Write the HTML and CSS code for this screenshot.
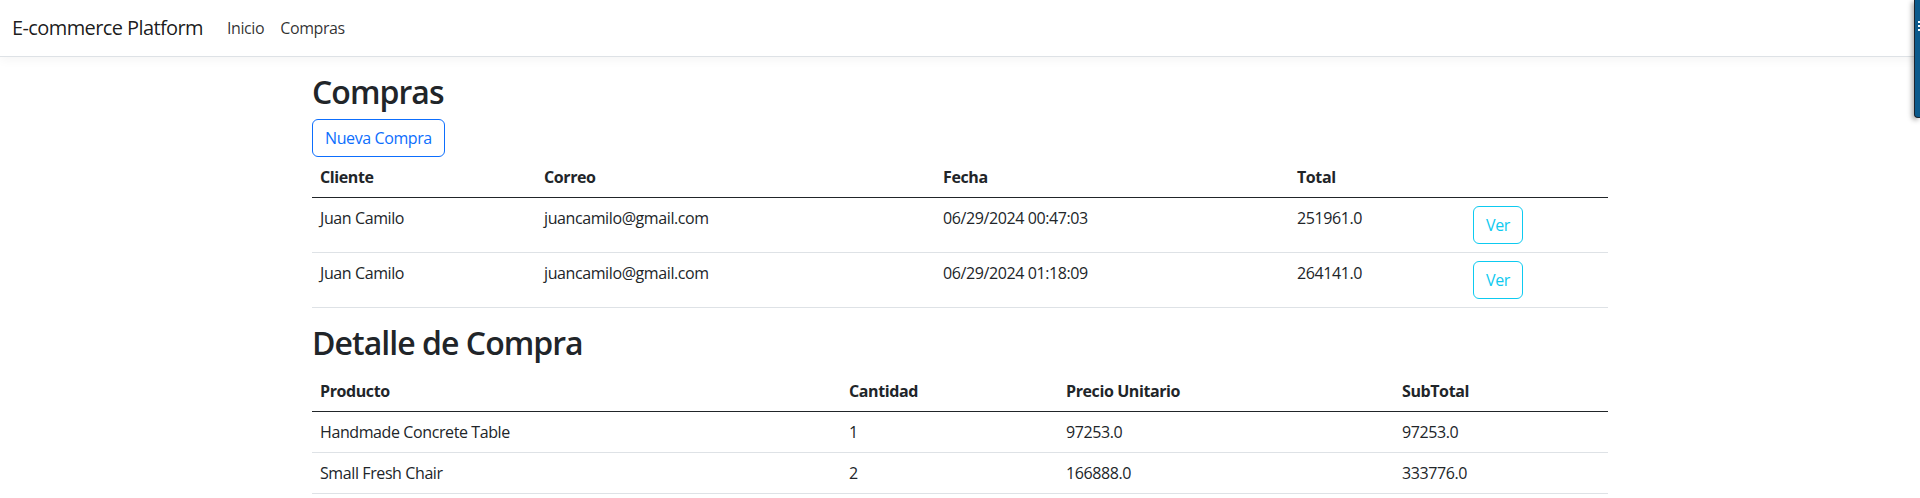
FILE: index.html
```html
<!DOCTYPE html>
<html lang="es">
<head>
<meta charset="utf-8">
<title>E-commerce Platform</title>
<link rel="stylesheet" href="styles.css">
</head>
<body>
<nav class="navbar">
  <div class="navbar-inner">
    <a class="brand" href="#">E-commerce Platform</a>
    <ul class="nav">
      <li><a class="nav-link" href="#">Inicio</a></li>
      <li><a class="nav-link" href="#">Compras</a></li>
    </ul>
  </div>
</nav>

<main class="container">
  <h2 class="title">Compras</h2>
  <button class="btn btn-primary-outline">Nueva Compra</button>
  <table class="table">
    <colgroup>
      <col class="c-cliente"><col class="c-correo"><col class="c-fecha"><col class="c-total"><col class="c-accion">
    </colgroup>
    <thead>
      <tr><th>Cliente</th><th>Correo</th><th>Fecha</th><th>Total</th><th></th></tr>
    </thead>
    <tbody>
      <tr>
        <td>Juan Camilo</td><td>juancamilo@gmail.com</td><td>06/29/2024 00:47:03</td><td>251961.0</td>
        <td><button class="btn btn-info-outline">Ver</button></td>
      </tr>
      <tr>
        <td>Juan Camilo</td><td>juancamilo@gmail.com</td><td>06/29/2024 01:18:09</td><td>264141.0</td>
        <td><button class="btn btn-info-outline">Ver</button></td>
      </tr>
    </tbody>
  </table>

  <h2 class="title">Detalle de Compra</h2>
  <table class="table">
    <colgroup>
      <col class="c-producto"><col class="c-cantidad"><col class="c-precio"><col class="c-subtotal">
    </colgroup>
    <thead>
      <tr><th>Producto</th><th>Cantidad</th><th>Precio Unitario</th><th>SubTotal</th></tr>
    </thead>
    <tbody>
      <tr><td>Handmade Concrete Table</td><td>1</td><td>97253.0</td><td>97253.0</td></tr>
      <tr><td>Small Fresh Chair</td><td>2</td><td>166888.0</td><td>333776.0</td></tr>
    </tbody>
  </table>
</main>

<div class="side-widget"><span></span><span></span><span></span></div>
</body>
</html>
```

FILE: styles.css
```css
* { box-sizing: border-box; }

html, body { height: 100%; }

body {
  margin: 0;
  font-family: "Segoe UI", "Open Sans", "Noto Sans", sans-serif;
  font-size: 16px;
  line-height: 1.5;
  letter-spacing: -0.025em;
  color: #212529;
  background: #fff;
  overflow: hidden;
}

.navbar {
  position: relative;
  background: #fff;
  padding: 8px 0;
  border-bottom: 1px solid #dee2e6;
  box-shadow: 0 3px 10px rgba(0, 0, 0, 0.045);
  z-index: 2;
}

.navbar-inner {
  display: flex;
  align-items: center;
  padding: 0 12px;
}

.brand {
  font-size: 20px;
  line-height: 30px;
  padding: 5px 0;
  margin-right: 16px;
  letter-spacing: -0.03em;
  color: rgba(0, 0, 0, 0.9);
  text-decoration: none;
}

.nav {
  display: flex;
  list-style: none;
  margin: 0;
  padding: 0;
}

.nav-link {
  display: block;
  padding: 8px;
  color: rgba(0, 0, 0, 0.82);
  text-decoration: none;
}

.container {
  max-width: 1320px;
  margin: 16px auto 0;
  padding: 0 12px;
}

.title {
  font-size: 32px;
  font-weight: 600;
  line-height: 1.2;
  margin: 0 0 8px;
  letter-spacing: -0.03em;
}

.btn {
  display: inline-block;
  font-family: inherit;
  font-size: 16px;
  line-height: 24px;
  letter-spacing: inherit;
  padding: 6px 12px;
  background: transparent;
  border: 1px solid;
  border-radius: 6px;
  cursor: pointer;
  vertical-align: middle;
}

.btn-primary-outline {
  color: #0d6efd;
  border-color: #0d6efd;
}

.btn-info-outline {
  color: #0dcaf0;
  border-color: #0dcaf0;
}

.table {
  width: 100%;
  border-collapse: collapse;
  table-layout: fixed;
  margin-bottom: 16px;
}

.table th,
.table td {
  padding: 8px;
  text-align: left;
  vertical-align: top;
  border-bottom: 1px solid #dee2e6;
}

.table th {
  font-weight: 700;
  border-bottom-color: #212529;
}

.c-cliente { width: 224px; }
.c-correo { width: 399px; }
.c-fecha { width: 354px; }
.c-total { width: 176px; }
.c-accion { width: 143px; }

.c-producto { width: 529px; }
.c-cantidad { width: 217px; }
.c-precio { width: 336px; }
.c-subtotal { width: 214px; }

.side-widget {
  position: fixed;
  top: 0;
  right: 0;
  width: 6px;
  height: 118px;
  background: #0b5a8c;
  border-left: 1px solid #1b2530;
  border-bottom: 1px solid #1b2530;
  border-bottom-left-radius: 4px;
  box-shadow: -2px 2px 5px rgba(0, 0, 0, 0.35);
  padding-top: 21px;
  padding-left: 3px;
  display: flex;
  flex-direction: column;
  gap: 2px;
  z-index: 5;
}

.side-widget span {
  display: block;
  width: 3px;
  height: 2px;
  background: #fff;
}
```
